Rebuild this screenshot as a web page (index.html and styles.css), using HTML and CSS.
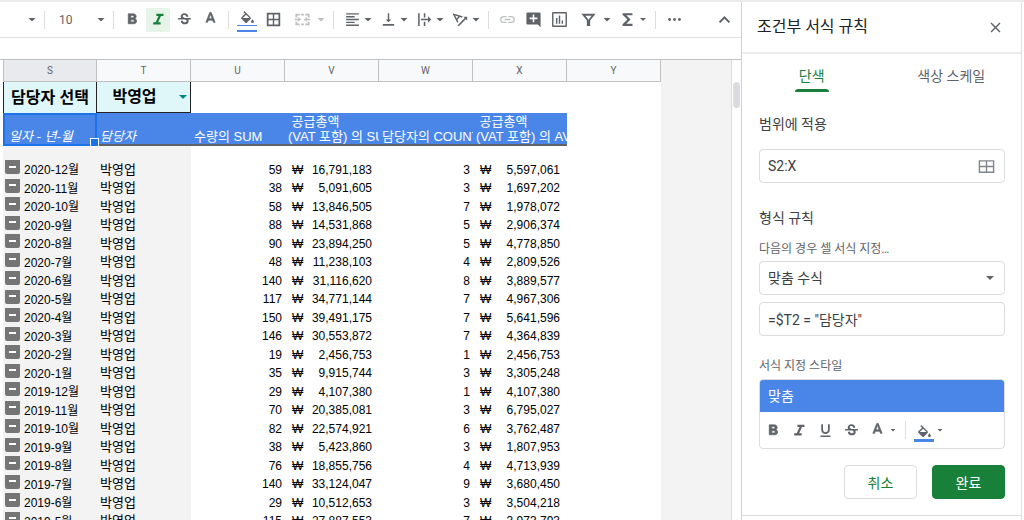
FILE: index.html
```html
<!DOCTYPE html>
<html lang="ko">
<head>
    <meta charset="UTF-8">
    <meta name="viewport" content="width=device-width, initial-scale=1.0">
    <title>조건부 서식 규칙</title>
    <link rel="stylesheet" href="styles.css">
</head>
<body>
    <!-- Shared icons -->
    <svg class="icon-defs" aria-hidden="true">
        <symbol id="i-bold" viewBox="0 0 24 24"><path stroke="currentColor" d="M15.6 10.8c1-.7 1.6-1.8 1.6-2.8 0-2.3-1.7-4-4-4H6v14h8c2.100 0 3.800-1.700 3.800-3.800 0-1.500-.9-2.800-2.200-3.400zM9.500 6.500h3a1.500 1.500 0 0 1 0 3h-3zm3.500 9H9.500v-3H13a1.500 1.500 0 0 1 0 3z"/></symbol>
        <symbol id="i-italic" viewBox="0 0 24 24"><path d="M9 4v3h3l-4 9H4.500v3H15v-3h-3.500l4-9H19V4z"/></symbol>
        <symbol id="i-underline" viewBox="0 0 24 24"><path d="M12 17c3.300 0 6-2.700 6-6V3h-2.500v8a3.500 3.500 0 0 1-7 0V3H6v8c0 3.300 2.700 6 6 6zm-7 2v2h14v-2z"/></symbol>
        <symbol id="i-strike" viewBox="0 0 24 24"><path d="M7.200 9.800C6 7.500 6.900 4.900 9.200 3.900c3.700-1.600 8.200.1 8.200 4.200h-3c0-2.500-4.400-3.200-4.800-.9-.2 1.100.6 1.600 2.400 2.600zM21 12v-2H3v2h9.600c2.500 1 2.900 1.700 2.300 2.900-.9 1.800-5.300 1.300-5-1.300h-3c-.2 5.600 6.600 6.400 9.500 4 1.600-1.200 1.900-3.200 1.100-5.600z"/></symbol>
        <symbol id="i-color" viewBox="0 0 24 24"><path stroke="currentColor" d="M11 2 5.500 16h2.300l1.100-3h6.200l1.100 3h2.300L13 2zm-1.400 9L12 4.700l2.400 6.300z"/></symbol>
        <symbol id="i-fill" viewBox="0 0 24 24"><path d="M16.600 9 7.600 0 6.200 1.400l2.400 2.400-5.200 5.100c-.6.600-.6 1.500 0 2.100l5.500 5.500c.6.600 1.600.6 2.200 0l5.500-5.500c.5-.5.500-1.400-.1-2zM5.200 10 10 5.200 14.800 10zM19 11.500s-2 2.200-2 3.500a2 2 0 0 0 4 0c0-1.300-2-3.500-2-3.500z"/></symbol>
        <symbol id="i-borders" viewBox="0 0 24 24"><path d="M2.500 2.500v19h19v-19zM11 19H5v-6h6zm0-8H5V5h6zm8 8h-6v-6h6zm0-8h-6V5h6z"/></symbol>
        <symbol id="i-close" viewBox="0 0 24 24"><path d="M19 6.400 17.600 5 12 10.600 6.400 5 5 6.400l5.600 5.600L5 17.600 6.400 19l5.600-5.600 5.600 5.600 1.400-1.400-5.600-5.600z"/></symbol>
    </svg>

    <div class="app">
        <main class="workspace">
            <div class="toolbar">
                <button class="caret" aria-label="글꼴"></button>
                <span class="sep"></span>
                <input class="font-size" type="text" value="10" aria-label="글꼴 크기">
                <button class="caret" aria-label="크기 목록"></button>
                <span class="sep"></span>
                <button class="tool" aria-label="굵게"><svg><use href="#i-bold"/></svg></button>
                <button class="tool active" aria-label="기울임꼴"><svg><use href="#i-italic"/></svg></button>
                <button class="tool" aria-label="취소선"><svg><use href="#i-strike"/></svg></button>
                <button class="tool" aria-label="텍스트 색상"><svg><use href="#i-color"/></svg></button>
                <span class="sep"></span>
                <button class="tool fill double" aria-label="채우기 색상"><svg><use href="#i-fill"/></svg></button>
                <button class="tool" aria-label="테두리"><svg><use href="#i-borders"/></svg></button>
                <button class="tool wide faded" aria-label="셀 병합"><svg viewBox="0 0 24 24"><path d="M2 9V4h6v2.500H4.500V9zM10 4h4v2.500h-4zM16 4h6v5h-2.500V6.500H16zM2 15v5h6v-2.500H4.500V15zM10 17.500h4V20h-4zM16 20h6v-5h-2.500v2.500H16zM1 11h5V8.500l4 3.500-4 3.500V13H1zM23 11h-5V8.500L14 12l4 3.500V13h5z"/></svg></button>
                <button class="caret faded" aria-label="병합 유형"></button>
                <span class="sep"></span>
                <button class="tool" aria-label="가로 정렬"><svg viewBox="0 0 24 24"><path d="M3 3h18v2H3zM3 7h12v2H3zM3 11h18v2H3zM3 15h12v2H3zM3 19h18v2H3z"/></svg></button>
                <button class="caret" aria-label="가로 정렬 목록"></button>
                <button class="tool" aria-label="세로 정렬"><svg viewBox="0 0 24 24"><path d="M16 12h-3V3h-2v9H8l4 4zM4 18.500h16v2.200H4z"/></svg></button>
                <button class="caret" aria-label="세로 정렬 목록"></button>
                <button class="tool" aria-label="텍스트 줄바꿈"><svg viewBox="0 0 24 24"><path d="M3 3h2.200v18H3zM11 3h2.200v6H11zM11 15h2.200v6H11zM7 11h10V7.500l4.500 4.500-4.500 4.500V13H7z"/></svg></button>
                <button class="caret" aria-label="줄바꿈 목록"></button>
                <button class="tool" aria-label="텍스트 회전"><svg viewBox="0 0 24 24"><path d="M1.500 3.500 15 7.500l-.8 2-3-.9-3.600 3.700 1.400 2.800-1.600 1.600-6-11.800zM4.400 6.500l2.200 4 2.400-2.600zM8 20 18 10l-2-2h5.500v5.500l-2-2L9.600 21.500z"/></svg></button>
                <button class="caret" aria-label="회전 목록"></button>
                <span class="sep"></span>
                <button class="tool faded" aria-label="링크 삽입"><svg viewBox="0 0 24 24"><path d="M3.400 12c0-1.800 1.400-3.200 3.200-3.200h4.200V7H6.600a5 5 0 0 0 0 10h4.200v-1.800H6.600A3.200 3.200 0 0 1 3.400 12zM8 13h8v-2H8zM17.400 7h-4.200v1.800h4.200a3.200 3.200 0 0 1 0 6.400h-4.200V17h4.200a5 5 0 0 0 0-10z"/></svg></button>
                <button class="tool" aria-label="댓글 삽입"><svg viewBox="0 0 24 24"><path d="M22 3.500A1.500 1.500 0 0 0 20.500 2h-17A1.500 1.500 0 0 0 2 3.500v14A1.500 1.500 0 0 0 3.500 19H18l4 4zM17.500 11.500h-4.400v4.400h-2.200v-4.400H6.500V9.300h4.400V5h2.200v4.300h4.400z"/></svg></button>
                <button class="tool" aria-label="차트 삽입"><svg viewBox="0 0 24 24"><path d="M21 1.500H3A1.500 1.500 0 0 0 1.500 3v18A1.500 1.500 0 0 0 3 22.500h18a1.500 1.500 0 0 0 1.500-1.500V3A1.500 1.500 0 0 0 21 1.500zM20.500 20.500h-17v-17h17zM7 10h2v8H7zM11 6.500h2V18h-2zM15 13.500h2V18h-2z"/></svg></button>
                <button class="tool wide" aria-label="필터 만들기"><svg viewBox="0 0 24 24"><path d="M2 4h20l-7.700 9.500V21H9.700v-7.500zM7.600 6.800l4.400 5.500 4.400-5.500z"/></svg></button>
                <button class="caret" aria-label="필터 보기"></button>
                <button class="tool" aria-label="함수"><svg viewBox="0 0 24 24"><path d="M19 3H5v2.400L12 12l-7 6.600V21h14v-3H10.300l6-6-6-6H19z"/></svg></button>
                <button class="caret small" aria-label="함수 목록"></button>
                <span class="sep"></span>
                <button class="tool" aria-label="더보기"><svg viewBox="0 0 24 24"><circle cx="5" cy="12" r="2"/><circle cx="12" cy="12" r="2"/><circle cx="19" cy="12" r="2"/></svg></button>
                <button class="tool collapse" aria-label="메뉴 숨기기"><svg viewBox="0 0 24 24"><path d="m12 7-8 8 2 2 6-6 6 6 2-2z"/></svg></button>
            </div>
            <div class="formula-bar"></div>
            <div class="grid-area">
                <div class="sheet">
                    <table>
                        <colgroup><col><col><col><col><col><col><col></colgroup>
                        <thead>
                            <tr><th class="selected">S</th><th>T</th><th>U</th><th>V</th><th>W</th><th>X</th><th>Y</th></tr>
                        </thead>
                        <tbody>
                            <tr class="picker">
                                <td class="pick-label">담당자 선택</td>
                                <td class="pick-value"><div class="pick"><span>박영업</span><button class="caret teal" aria-label="담당자 목록"></button></div></td>
                                <td></td><td></td><td></td><td></td><td></td>
                            </tr>
                            <tr class="titles">
                                <td class="cursor"><i>일자 - 년-월</i></td>
                                <td><i>담당자</i></td>
                                <td>수량의 SUM</td>
                                <td> 공급총액
(VAT 포함) 의 SUM</td>
                                <td>담당자의 COUNTA</td>
                                <td> 공급총액
(VAT 포함) 의 AVERAGE</td>
                                <td class="blank"></td>
                            </tr>
                            <tr class="gap"><td></td><td></td><td></td><td></td><td></td><td></td><td></td></tr>
                            <tr><td><button class="fold" aria-label="접기"></button>2020-12월</td><td>박영업</td><td>59</td><td><div class="won">16,791,183</div></td><td>3</td><td><div class="won">5,597,061</div></td><td></td></tr>
                            <tr><td><button class="fold" aria-label="접기"></button>2020-11월</td><td>박영업</td><td>38</td><td><div class="won">5,091,605</div></td><td>3</td><td><div class="won">1,697,202</div></td><td></td></tr>
                            <tr><td><button class="fold" aria-label="접기"></button>2020-10월</td><td>박영업</td><td>58</td><td><div class="won">13,846,505</div></td><td>7</td><td><div class="won">1,978,072</div></td><td></td></tr>
                            <tr><td><button class="fold" aria-label="접기"></button>2020-9월</td><td>박영업</td><td>88</td><td><div class="won">14,531,868</div></td><td>5</td><td><div class="won">2,906,374</div></td><td></td></tr>
                            <tr><td><button class="fold" aria-label="접기"></button>2020-8월</td><td>박영업</td><td>90</td><td><div class="won">23,894,250</div></td><td>5</td><td><div class="won">4,778,850</div></td><td></td></tr>
                            <tr><td><button class="fold" aria-label="접기"></button>2020-7월</td><td>박영업</td><td>48</td><td><div class="won">11,238,103</div></td><td>4</td><td><div class="won">2,809,526</div></td><td></td></tr>
                            <tr><td><button class="fold" aria-label="접기"></button>2020-6월</td><td>박영업</td><td>140</td><td><div class="won">31,116,620</div></td><td>8</td><td><div class="won">3,889,577</div></td><td></td></tr>
                            <tr><td><button class="fold" aria-label="접기"></button>2020-5월</td><td>박영업</td><td>117</td><td><div class="won">34,771,144</div></td><td>7</td><td><div class="won">4,967,306</div></td><td></td></tr>
                            <tr><td><button class="fold" aria-label="접기"></button>2020-4월</td><td>박영업</td><td>150</td><td><div class="won">39,491,175</div></td><td>7</td><td><div class="won">5,641,596</div></td><td></td></tr>
                            <tr><td><button class="fold" aria-label="접기"></button>2020-3월</td><td>박영업</td><td>146</td><td><div class="won">30,553,872</div></td><td>7</td><td><div class="won">4,364,839</div></td><td></td></tr>
                            <tr><td><button class="fold" aria-label="접기"></button>2020-2월</td><td>박영업</td><td>19</td><td><div class="won">2,456,753</div></td><td>1</td><td><div class="won">2,456,753</div></td><td></td></tr>
                            <tr><td><button class="fold" aria-label="접기"></button>2020-1월</td><td>박영업</td><td>35</td><td><div class="won">9,915,744</div></td><td>3</td><td><div class="won">3,305,248</div></td><td></td></tr>
                            <tr><td><button class="fold" aria-label="접기"></button>2019-12월</td><td>박영업</td><td>29</td><td><div class="won">4,107,380</div></td><td>1</td><td><div class="won">4,107,380</div></td><td></td></tr>
                            <tr><td><button class="fold" aria-label="접기"></button>2019-11월</td><td>박영업</td><td>70</td><td><div class="won">20,385,081</div></td><td>3</td><td><div class="won">6,795,027</div></td><td></td></tr>
                            <tr><td><button class="fold" aria-label="접기"></button>2019-10월</td><td>박영업</td><td>82</td><td><div class="won">22,574,921</div></td><td>6</td><td><div class="won">3,762,487</div></td><td></td></tr>
                            <tr><td><button class="fold" aria-label="접기"></button>2019-9월</td><td>박영업</td><td>38</td><td><div class="won">5,423,860</div></td><td>3</td><td><div class="won">1,807,953</div></td><td></td></tr>
                            <tr><td><button class="fold" aria-label="접기"></button>2019-8월</td><td>박영업</td><td>76</td><td><div class="won">18,855,756</div></td><td>4</td><td><div class="won">4,713,939</div></td><td></td></tr>
                            <tr><td><button class="fold" aria-label="접기"></button>2019-7월</td><td>박영업</td><td>140</td><td><div class="won">33,124,047</div></td><td>9</td><td><div class="won">3,680,450</div></td><td></td></tr>
                            <tr><td><button class="fold" aria-label="접기"></button>2019-6월</td><td>박영업</td><td>29</td><td><div class="won">10,512,653</div></td><td>3</td><td><div class="won">3,504,218</div></td><td></td></tr>
                            <tr><td><button class="fold" aria-label="접기"></button>2019-5월</td><td>박영업</td><td>115</td><td><div class="won">27,887,553</div></td><td>7</td><td><div class="won">3,973,793</div></td><td></td></tr>
                        </tbody>
                    </table>
                </div>
                <div class="scrollbar"><div class="thumb"></div></div>
            </div>
        </main>

        <aside class="panel">
            <header class="panel-header">
                <h1>조건부 서식 규칙</h1>
                <button class="close" aria-label="닫기"><svg><use href="#i-close"/></svg></button>
            </header>
            <nav class="tabs">
                <button class="tab current">단색</button>
                <button class="tab">색상 스케일</button>
            </nav>
            <form class="rule-form">
                <label class="section-label" for="range">범위에 적용</label>
                <div class="range-box">
                    <input type="text" id="range" value="S2:X">
                    <button type="button" class="range-button" aria-label="데이터 범위 선택"><svg viewBox="0 0 24 24"><path d="M1 3v18h22V3zm10 16H3v-6h8zm0-8H3V5h8zm10 8h-8v-6h8zm0-8h-8V5h8z"/></svg></button>
                </div>

                <h2 class="section-label">형식 규칙</h2>
                <label class="small-label" for="condition">다음의 경우 셀 서식 지정…</label>
                <div class="select-box">
                    <select id="condition">
                        <option>맞춤 수식</option>
                    </select>
                </div>
                <input class="formula" type="text" value='=$T2 = "담당자"' aria-label="수식">

                <h3 class="small-label style-label">서식 지정 스타일</h3>
                <div class="style-box">
                    <div class="preview">맞춤</div>
                    <div class="style-tools">
                        <button type="button" class="tool" aria-label="굵게"><svg><use href="#i-bold"/></svg></button>
                        <button type="button" class="tool" aria-label="기울임꼴"><svg><use href="#i-italic"/></svg></button>
                        <button type="button" class="tool" aria-label="밑줄"><svg><use href="#i-underline"/></svg></button>
                        <button type="button" class="tool" aria-label="취소선"><svg><use href="#i-strike"/></svg></button>
                        <button type="button" class="tool" aria-label="텍스트 색상"><svg><use href="#i-color"/></svg></button>
                        <button type="button" class="caret small" aria-label="텍스트 색상 목록"></button>
                        <span class="sep"></span>
                        <button type="button" class="tool fill" aria-label="채우기 색상"><svg><use href="#i-fill"/></svg></button>
                        <button type="button" class="caret small" aria-label="채우기 색상 목록"></button>
                    </div>
                </div>

                <div class="actions">
                    <button type="button" class="button">취소</button>
                    <button type="submit" class="button primary">완료</button>
                </div>
            </form>
        </aside>
    </div>
</body>
</html>
```
FILE: styles.css
```css
/* General */
* {
    box-sizing: border-box;
}

body {
    margin: 0;
    font-family: Roboto, "Noto Sans CJK KR", sans-serif;
    color: #3c4043;
    background: #fff;
    overflow: hidden;
}

button, input, select {
    font-family: inherit;
    margin: 0;
    padding: 0;
    border: none;
    background: none;
    color: inherit;
}

h1, h2, h3 {
    margin: 0;
    font-weight: normal;
}

svg {
    display: block;
    width: 17px;
    height: 17px;
    fill: currentColor;
}

.icon-defs {
    display: none;
}

.app {
    display: flex;
    height: 100vh;
    padding-right: 2px;
    border-top: 2px solid #ebebeb;
}

.workspace {
    flex: 1;
    min-width: 0;
    display: flex;
    flex-direction: column;
}

/* Toolbar */
.toolbar {
    display: flex;
    align-items: center;
    height: 36px;
    padding: 0 4px 0 29px;
    border-bottom: 1px solid #e0e0e0;
    color: #5f6368;
}

.tool {
    display: flex;
    align-items: center;
    justify-content: center;
    flex: none;
    width: 24px;
    height: 24px;
    margin: 0 1px;
    border-radius: 2px;
}

.tool.wide {
    margin: 0 4px;
}

.tool.active {
    background: #e6f4ea;
    color: #188038;
}

.tool.collapse {
    margin-left: auto;
}

.faded {
    opacity: 0.4;
}

.fill {
    flex-direction: column;
    justify-content: flex-end;
}

.fill svg {
    margin-bottom: -3px;
}

.fill::after {
    content: "";
    width: 20px;
    height: 3px;
    background: #4a86e8;
}

.fill.double::after {
    height: 4px;
    background: none;
    border-top: 1px solid #4a86e8;
    border-bottom: 2px solid #4a86e8;
}

.caret {
    flex: none;
    width: 6px;
    height: 24px;
    margin-right: 4px;
}

.caret::before {
    content: "";
    display: block;
    width: 8px;
    height: 4px;
    margin-left: -1px;
    background: currentColor;
    clip-path: polygon(0 0, 100% 0, 50% 100%);
}

.caret.small::before {
    width: 6px;
    height: 3px;
    margin-left: 0;
}

.sep {
    flex: none;
    width: 1px;
    height: 18px;
    margin: 0 5px;
    background: #dadce0;
}

.font-size {
    width: 48px;
    padding-left: 9px;
    font-size: 12px;
}

.formula-bar {
    height: 21px;
}

/* Spreadsheet */
.grid-area {
    flex: 1;
    min-height: 0;
    display: flex;
    border-top: 1px solid #c0c0c0;
    background: #f3f3f3;
}

.sheet {
    flex: 1;
    min-width: 0;
    overflow: hidden;
}

table {
    width: 661px;
    padding-left: 3px;
    background: #fff;
    table-layout: fixed;
    border-spacing: 0;
    font-family: "Liberation Sans", "Noto Sans CJK KR", sans-serif;
    font-size: 12px;
    color: #000;
}

col {
    width: 94px;
}

th {
    height: 22px;
    padding: 0;
    border-right: 1px solid #c0c0c0;
    border-bottom: 1px solid #c0c0c0;
    background: #f8f9fa;
    font-family: Roboto, sans-serif;
    font-size: 10px;
    font-weight: normal;
    color: #5f6368;
}

th.selected {
    border-left: 1px solid #c0c0c0;
    background: #e8eaed;
}

td {
    height: 19px;
    padding: 0 3px;
    line-height: 16px;
    white-space: pre;
    overflow: hidden;
    vertical-align: middle;
}

tr:nth-child(odd) td {
    height: 18px;
}

tbody td:nth-child(n+3) {
    text-align: right;
}

tbody td:nth-child(-n+2) {
    background: #f3f3f3;
}

tbody td:nth-child(2) {
    font-size: 13px;
}

.picker .pick-label, .picker td.pick-value {
    height: 31px;
    padding: 0;
    border-right: 1px solid #222;
    background: #e0f7fa;
    font-size: 16px;
    font-weight: bold;
    text-align: center;
}

.picker .pick-label {
    border-left: 1px solid #222;
}

.picker .pick-value {
    border-bottom: 1px solid #222;
}

.pick {
    display: flex;
    align-items: center;
    line-height: 24px;
}

.pick span {
    flex: 1;
    padding-right: 8px;
}

.teal {
    color: #00897b;
}

.titles td {
    height: 33px;
    line-height: 15px;
    border-bottom: 2px solid #5f6368;
    vertical-align: bottom;
    color: #fff;
}

.titles td:nth-child(n) {
    background: #4a86e8;
    font-size: 13px;
    text-align: left;
}

.titles td.blank {
    border: none;
    background: #fff;
}

.titles .cursor {
    position: relative;
    overflow: visible;
    border: 2px solid #1a73e8;
    padding-left: 4px;
}

/* fill handle of the selected cell */
.cursor::after {
    content: "";
    position: absolute;
    right: -4px;
    bottom: -3px;
    width: 7px;
    height: 7px;
    border: 1px solid #fff;
    background: #1a73e8;
}

.gap td, tr.gap:nth-child(odd) td {
    height: 14px;
}

.fold {
    display: inline-block;
    width: 15px;
    height: 15px;
    margin: -2px 4px 0 -1px;
    border-radius: 2px;
    background: #757575;
    vertical-align: 0;
}

.fold::before {
    content: "";
    display: block;
    width: 7px;
    height: 2px;
    margin: 0 auto;
    background: #fff;
}

.won {
    display: flex;
    justify-content: space-between;
    padding: 0 4px;
}

.won::before {
    content: "₩";
}

.scrollbar {
    width: 10px;
    padding-top: 22px;
    border-left: 1px solid #dadce0;
    background: #fff;
}

.thumb {
    height: 26px;
    margin: 0 1px;
    border-radius: 4px;
    background: #dadce0;
}

/* Side panel */
.panel {
    width: 281px;
    flex: none;
    border-left: 1px solid #d0d0d0;
    border-right: 1px solid #e0e0e0;
    display: flex;
    flex-direction: column;
}

.panel-header {
    display: flex;
    align-items: center;
    justify-content: space-between;
    height: 52px;
    padding: 0 17px 0 15px;
    border-bottom: 2px solid #ebebeb;
}

.panel-header h1 {
    font-size: 16px;
    line-height: 24px;
    color: #202124;
}

.close {
    color: #5f6368;
}

.tabs {
    display: flex;
    height: 38px;
    align-items: flex-end;
}

.tab {
    flex: 1;
    display: flex;
    flex-direction: column;
    align-items: center;
    gap: 2px;
    font-size: 14px;
    line-height: 22px;
    color: #5f6368;
}

.tab::after {
    content: "";
    width: 34px;
    height: 3px;
    border-radius: 3px 3px 0 0;
}

.tab.current {
    color: #188038;
}

.tab.current::after {
    background: #188038;
}

.rule-form {
    display: flex;
    flex-direction: column;
    padding: 22px 16px 16px 17px;
    border-bottom: 1px solid #dadce0;
}

.section-label {
    margin-bottom: 15px;
    font-size: 14px;
    line-height: 20px;
}

.small-label {
    margin-bottom: 2px;
    font-size: 12px;
    line-height: 20px;
    color: #5f6368;
}

.range-box, .select-box, .formula {
    display: flex;
    align-items: center;
    height: 34px;
    border: 1px solid #dadce0;
    border-radius: 4px;
    font-size: 14px;
}

.range-box {
    margin-bottom: 25px;
    padding: 0 9px 0 8px;
}

.range-box input {
    flex: 1;
    min-width: 0;
    font-size: 14px;
}

.range-button {
    color: #80868b;
}

h2.section-label {
    margin-bottom: 11px;
}

.select-box {
    margin-bottom: 7px;
}

.select-box select {
    flex: 1;
    height: 32px;
    padding: 0 8px;
    font-size: 14px;
    appearance: none;
}

.select-box::after {
    content: "";
    width: 8px;
    height: 4px;
    margin-right: 10px;
    background: #5f6368;
    clip-path: polygon(0 0, 100% 0, 50% 100%);
}

.formula {
    margin-bottom: 20px;
    padding: 0 8px;
}

.style-label {
    margin-bottom: 3px;
}

.style-box {
    border: 1px solid #dadce0;
    border-radius: 4px;
    overflow: hidden;
}

.preview {
    height: 32px;
    padding: 0 8px;
    background: #4a86e8;
    color: #fff;
    font-size: 14px;
    line-height: 32px;
}

.style-tools {
    display: flex;
    align-items: center;
    height: 36px;
    color: #5f6368;
}

.actions {
    display: flex;
    justify-content: flex-end;
    gap: 15px;
    margin-top: 16px;
}

.button {
    width: 73px;
    height: 34px;
    border: 1px solid #dadce0;
    border-radius: 4px;
    font-size: 14px;
    color: #188038;
}

.button.primary {
    border-color: #188038;
    background: #188038;
    color: #fff;
}
```
